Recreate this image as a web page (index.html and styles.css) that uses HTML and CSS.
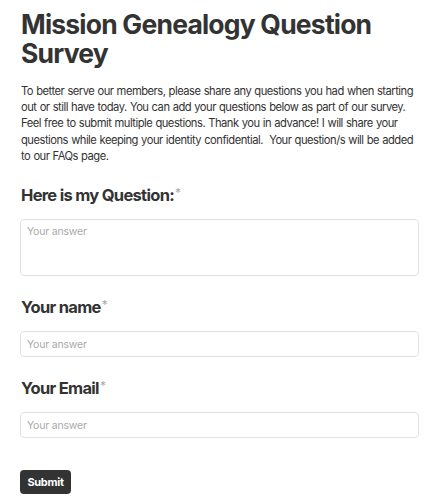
FILE: index.html
```html
<!DOCTYPE html>
<html lang="en">

<head>
    <meta charset="UTF-8">
    <meta name="viewport" content="width=device-width, initial-scale=1.0">
    <title>Mission Genealogy Question Survey</title>
    <link rel="stylesheet" href="styles.css">
</head>

<body>

    <div class="container">
        <h1>Mission Genealogy Question Survey</h1>
        <p class="intro">To better serve our members, please share any questions you had when starting out or still have today. You can add your questions below as part of our survey. Feel free to submit multiple questions. Thank you in advance! I will share your questions while keeping your identity confidential.&nbsp; Your question/s will be added to our FAQs page.</p>

        <!-- Survey fields -->
        <form class="survey">
            <div class="field">
                <label for="question">Here is my Question:<span class="req">*</span></label>
                <textarea id="question" placeholder="Your answer"></textarea>
            </div>
            <div class="field">
                <label for="name">Your name<span class="req">*</span></label>
                <input type="text" id="name" placeholder="Your answer" />
            </div>
            <div class="field">
                <label for="email">Your Email<span class="req">*</span></label>
                <input type="email" id="email" placeholder="Your answer" />
            </div>
            <button type="button" class="submit-btn">Submit</button>
        </form>
    </div>

</body>

</html>
```

FILE: styles.css
```css
* {
    margin: 0;
    padding: 0;
    box-sizing: border-box;
}

body {
    font-family: 'Inter', 'Liberation Sans', sans-serif;
    background: #fff;
    color: #333;
}

.container {
    padding: 10px 19px 0 20px;
}

h1 {
    font-size: 26.5px;
    font-weight: 700;
    line-height: 29px;
    letter-spacing: -0.8px;
    color: #333;
    padding-left: 1px;
}

.intro {
    margin-top: 15px;
    font-size: 11.2px;
    line-height: 16.2px;
    letter-spacing: -0.5px;
    word-spacing: 0.5px;
    color: #333;
    padding-left: 1px;
}

.survey {
    margin-top: 21px;
    display: flex;
    flex-direction: column;
}

.field {
    display: flex;
    flex-direction: column;
    margin-bottom: 21px;
}

.field label {
    font-size: 16.5px;
    font-weight: 700;
    letter-spacing: -0.7px;
    color: #333;
    padding-left: 1px;
    margin-bottom: 14px;
}

.req {
    color: #aaa;
    font-weight: 400;
    font-size: 12px;
    vertical-align: top;
    margin-left: 1px;
    letter-spacing: 0;
}

textarea,
input {
    width: 100%;
    border: 1px solid #e2e2e2;
    border-radius: 4px;
    font-family: 'Inter', 'Liberation Sans', sans-serif;
    font-size: 10.5px;
    letter-spacing: -0.2px;
    color: #333;
    padding: 5px 6px;
    outline: none;
    resize: none;
}

textarea {
    height: 57px;
}

input {
    height: 26px;
}

::placeholder {
    color: #aaa;
}

.submit-btn {
    align-self: flex-start;
    background: #333;
    color: #fff;
    border: none;
    border-radius: 4px;
    font-family: 'Inter', 'Liberation Sans', sans-serif;
    font-size: 11px;
    font-weight: 700;
    letter-spacing: -0.3px;
    width: 51px;
    height: 24px;
    margin-top: 11px;
    cursor: pointer;
}
```
